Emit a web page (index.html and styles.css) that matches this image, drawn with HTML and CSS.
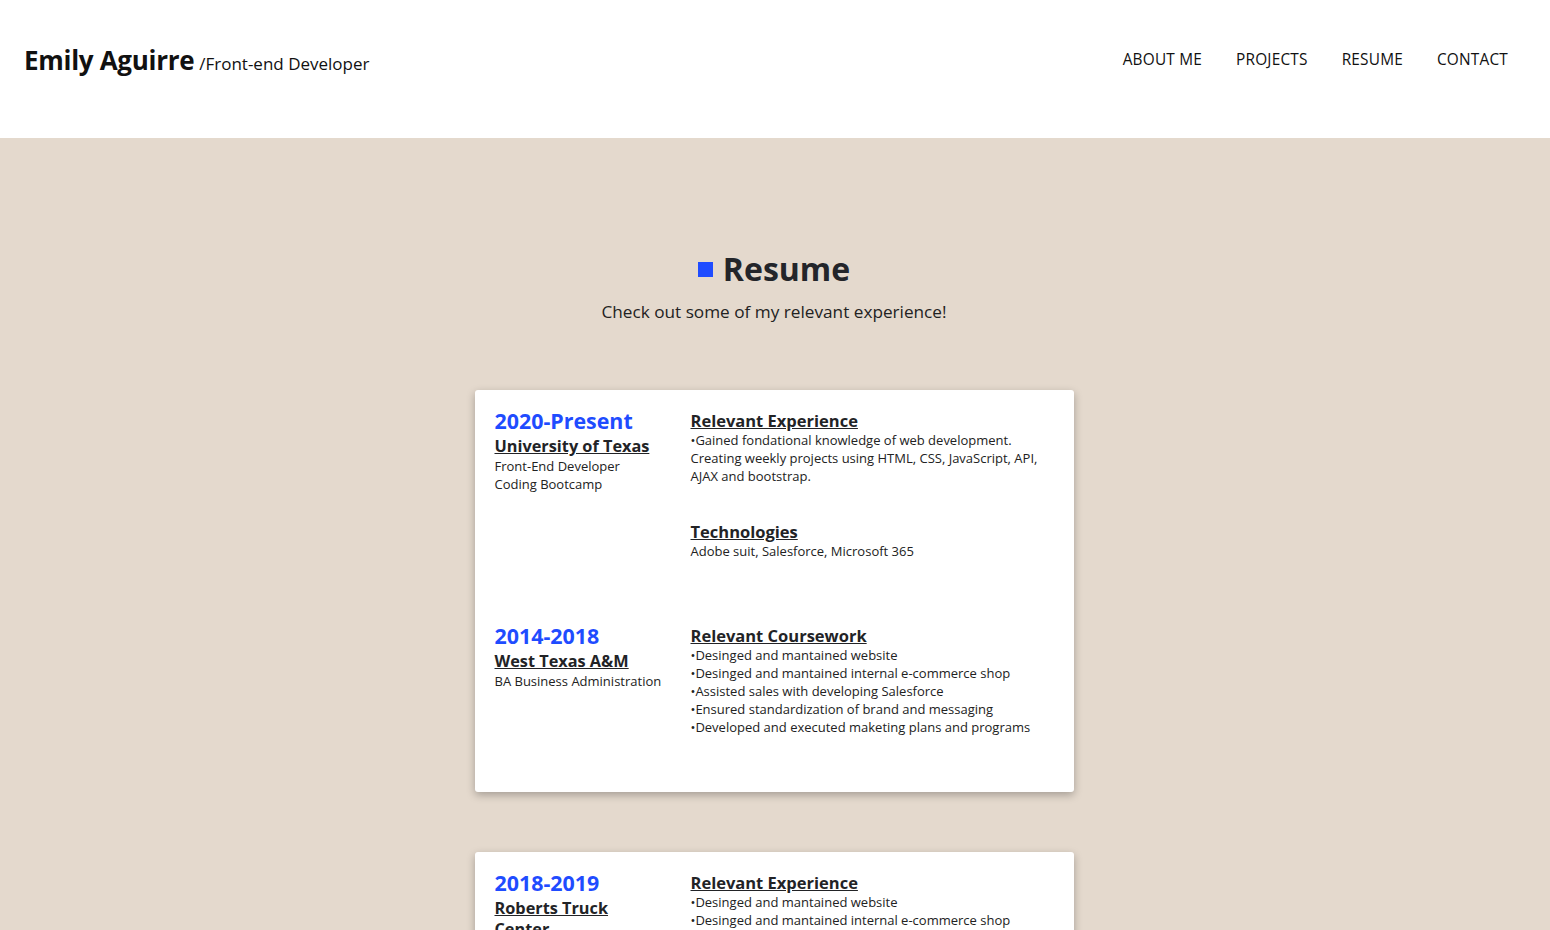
FILE: index.html
```html
<!DOCTYPE html>
<html lang="en">
<head>
<meta charset="utf-8">
<title>Emily Aguirre - Resume</title>
<link rel="stylesheet" href="styles.css">
</head>
<body>
<header class="site-header">
  <div class="brand">
    <span class="brand-name">Emily Aguirre</span>
    <span class="brand-role">/Front-end Developer</span>
  </div>
  <nav class="nav">
    <a href="#">ABOUT ME</a>
    <a href="#">PROJECTS</a>
    <a href="#">RESUME</a>
    <a href="#">CONTACT</a>
  </nav>
</header>
<main class="main">
  <h1 class="section-title"><span class="square"></span>Resume</h1>
  <p class="section-sub">Check out some of my relevant experience!</p>

  <section class="card">
    <div class="entry">
      <div class="entry-left">
        <div class="date">2020-Present</div>
        <div class="org">University of Texas</div>
        <div class="small">Front-End Developer</div>
        <div class="small">Coding Bootcamp</div>
      </div>
      <div class="entry-right">
        <div class="block">
          <div class="block-title">Relevant Experience</div>
          <div class="small">•Gained fondational knowledge of web development. Creating weekly projects using HTML, CSS, JavaScript, API, AJAX and bootstrap.</div>
        </div>
        <div class="block">
          <div class="block-title">Technologies</div>
          <div class="small">Adobe suit, Salesforce, Microsoft 365</div>
        </div>
      </div>
    </div>
    <div class="entry">
      <div class="entry-left">
        <div class="date">2014-2018</div>
        <div class="org">West Texas A&amp;M</div>
        <div class="small">BA Business Administration</div>
      </div>
      <div class="entry-right">
        <div class="block">
          <div class="block-title">Relevant Coursework</div>
          <div class="small">•Desinged and mantained website</div>
          <div class="small">•Desinged and mantained internal e-commerce shop</div>
          <div class="small">•Assisted sales with developing Salesforce</div>
          <div class="small">•Ensured standardization of brand and messaging</div>
          <div class="small">•Developed and executed maketing plans and programs</div>
        </div>
      </div>
    </div>
  </section>

  <section class="card">
    <div class="entry">
      <div class="entry-left">
        <div class="date">2018-2019</div>
        <div class="org">Roberts Truck Center</div>
        <div class="small">Marketing Coordinator</div>
      </div>
      <div class="entry-right">
        <div class="block">
          <div class="block-title">Relevant Experience</div>
          <div class="small">•Desinged and mantained website</div>
          <div class="small">•Desinged and mantained internal e-commerce shop</div>
          <div class="small">•Assisted sales with developing Salesforce</div>
          <div class="small">•Ensured standardization of brand and messaging</div>
        </div>
      </div>
    </div>
  </section>
</main>
</body>
</html>
```

FILE: styles.css
```css
* { box-sizing: border-box; }
html, body { margin: 0; padding: 0; }
body {
  font-family: "Open Sans", "Noto Sans", "Liberation Sans", sans-serif;
  color: #222326;
  background: #e4d9cd;
}
.site-header {
  height: 138px;
  background: #ffffff;
  display: flex;
  justify-content: space-between;
  align-items: flex-start;
  padding: 40px 42px 0 24px;
}
.brand { display: flex; align-items: baseline; gap: 5px; line-height: 40px; }
.brand-name { font-size: 26px; font-weight: 700; color: #111; letter-spacing: -0.3px; }
.brand-role { font-size: 17px; color: #111; }
.nav { display: flex; gap: 34px; line-height: 38px; padding-top: 1px; }
.nav a { font-size: 15.4px; letter-spacing: 0.2px; color: #111; text-decoration: none; }

.main { padding: 111px 2px 60px 0; display: flex; flex-direction: column; align-items: center; }
.section-title {
  margin: 0;
  font-size: 32px;
  line-height: 40px;
  font-weight: 700;
  color: #23252a;
  display: flex;
  align-items: center;
  gap: 10px;
}
.square { width: 15px; height: 15px; background: #1f4cff; display: inline-block; }
.section-sub { margin: 11px 0 66px; font-size: 17.2px; line-height: 24px; color: #222; }

.card {
  width: 599px;
  background: #fff;
  border-radius: 3px;
  box-shadow: 0 3px 8px rgba(0,0,0,0.28);
  padding: 18px 20px 56px;
  margin-bottom: 60px;
  display: flex;
  flex-direction: column;
  gap: 63px;
}
.entry { display: flex; }
.entry-left { width: 196px; flex-shrink: 0; }
.entry-right { flex: 1; display: flex; flex-direction: column; gap: 34px; }
.date { font-size: 21.4px; line-height: 25px; font-weight: 700; color: #1f4cff; }
.org { font-size: 16.3px; line-height: 21px; margin-top: 3px; max-width: 160px; font-weight: 700; color: #222326; text-decoration: underline; }
.block-title { font-size: 16.5px; line-height: 25px; font-weight: 700; color: #222326; text-decoration: underline; margin-bottom: -2px; }
.small { font-size: 13px; line-height: 18px; color: #222; }
.entry-right .small { padding-right: 12px; }
```
